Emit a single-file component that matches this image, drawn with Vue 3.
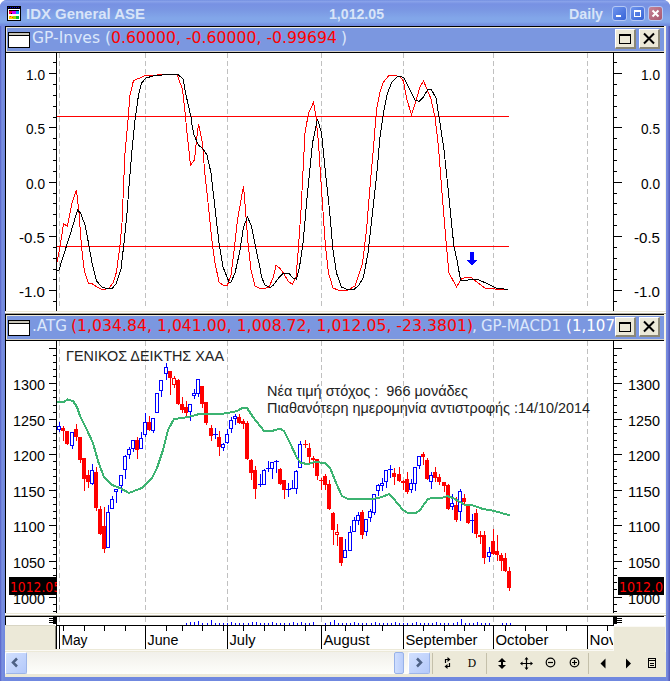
<script setup>
const months = [
  { x: 59, name: 'May', w: 26 },
  { x: 145, name: 'June', w: 31 },
  { x: 227, name: 'July', w: 26 },
  { x: 321, name: 'August', w: 46 },
  { x: 403, name: 'September', w: 72 },
  { x: 493, name: 'October', w: 53 },
  { x: 587, name: 'Nov', w: 27 },
]
const weeks = [63, 84, 104, 125, 166, 182, 202, 223, 243, 264, 284, 305, 325, 345, 362, 382, 423, 444, 464, 484, 505, 525, 546, 566, 607]

// Oscillator scale
const oscLabels = [1, 0.5, 0, -0.5, -1].map((v) => ({ y: Math.round(181.7 - v * 108.6), text: v.toFixed(1) }))
const oscMinor = []
for (let i = -11; i <= 11; i++) if (i % 5) oscMinor.push(Math.round(181.7 - i * 10.86))

// Price scale
const priceY = (p) => Math.round(383.2 + (1300 - p) * 0.711)
const priceLabels = [1300, 1250, 1200, 1150, 1100, 1050, 1000].map((p) => ({ y: priceY(p), text: String(p) }))
const priceMajor = [1350, 1300, 1250, 1200, 1150, 1100, 1050, 1000].map(priceY)
const priceMinor = []
for (let p = 980; p <= 1358; p += 10) if (p % 50) priceMinor.push(priceY(p))

const fastLine = '57,262 60,247 63.5,224 67.5,226 72.5,201 76.5,190 79,213 81.5,247 84.5,272 88.5,283 92.5,284 97,287 101,289 106,289 109,288 113,283 116.5,272 120,245 122,223 123.5,187 125,153 128,120 128.5,113 130,95 133.5,80.5 140,78 145,75.5 150,76 160,74.5 167,74 177,74.5 179,80 182.5,89 185.5,117 187,133 190.5,165 194.5,160 196.5,140 198.5,124 202.5,143 204.5,170 208.5,207 212.5,246 215,263 219,282 224,286 227.5,285 231,275 234.5,247 237.5,220 243.5,186 245.5,210 248,243 251,270 255,286 260,288.5 264,288.5 269,287 273,278 276,265.5 279.5,268 283.5,273 288,281 292.5,284.5 296,277 298.5,247 301,210 305,133 308.5,113 313.5,102.5 316,117 318.5,143 321.5,190 325.5,247 328.5,273 333,288 338,290 348,290 355,286 358.5,276 362.5,263 366.5,230 370,187 373.5,147 376.5,110 380,92 383.5,82 388.5,76 395,75.5 400,77 403.5,81 406.5,98 411.5,115 415.5,102 420,87 423.5,81 426.5,88 431,99 435,117 438.5,147 442,193 446.5,247 449,273 456.5,287 461.5,279 465,277.5 472,278 478,283 485,288 495,289 504,289.5'
const slowLine = '57,270.5 59,270 63,257 70,235 77.5,210 80.5,213 85,225 88.5,243 92,263 96.5,281 102,287 107,288.5 112,288.5 116,284 121,269 124,243 127,213 129.5,180 132,150 135,120 136,113 138.5,95 141.5,83 146,78 153,76 167,74.5 178,74.5 183,79 186,95 191,117 191.5,122 194,135 198.5,145 203,149 207,155 211,173 215,208 219,243 223,267 229,282 231,282 235,273 239.5,253 243.5,227 247.5,217 251.5,226 255.5,247 260,268 261.5,277 265,285 270,287.5 273.5,285 278.5,278 283,273.5 289,273.5 293.5,278.5 296.5,279 299.5,267 303,243 307.5,193 312.5,143 317.5,119 321.5,133 325.5,173 329.5,210 333,250 336.5,273 341.5,287 347,289.5 354,289.5 359,285 363.5,277 368,253 372.5,213 376.5,177 380,137 383.5,113 387.5,93 392,82 397,77 400.5,76.5 404,78 410,90 415,100 419,101.5 423.5,97 427.5,90 431,89 436,98 440,123 444,150 447.5,183 450.5,213 454,247 457,260 460.5,280 464,281 470,279.5 477.5,279.5 487,283.5 496,288 508.5,289.5'
const averageLine = '57,402 63.5,402 67.5,399.5 73,401 77,407 80,416 87,430 93,443 98,461 104,477 112,485 120,488 129,493 134,491 142,488 152,478 157,468 163,450 168,430 174,419 183,418 192,416 201,413.5 205,414 220,414 228,413 237,411 243,407.5 247,408 253,417 264,431 272,431 280,428.5 284,431 290,443 297,458 301,463 308,464 315,462 325,463 330,468 337,485 342,496 348,499 373,499 382,497 389,494 393,498 403,510 408,513 416,513 420,510 428,499 432,498 442,498 447,496 453,498 460,502 465,505 473,505.5 483,509 492,510.5 500,512.5 510,515.5'

// Candles: x, high, low, body top, body bottom, kind (b rising, r falling, h hollow falling)
const candles = `59 422 431 426 429 b|63 426 440 428 431 r|67 431 444 431 444 r|72 432 448 432 445 b|76 424 440 429 437 r|80 437 462 437 460 r|84 458 490 458 479 r|88 470 487 475 482 r|92 464 484 470 483 b|96 467 510 472 508 r|100 506 534 509 534 r|104 507 552 526 549 r|108 505 547 512 547 b|112 496 508 499 508 b|116 489 502 489 491 b|121 475 492 475 485 b|125 455 478 456 469 b|129 447 458 449 454 b|133 440 451 440 448 b|137 437 458 440 450 r|141 432 448 438 448 b|145 413 436 422 434 b|149 416 430 422 430 r|153 418 432 418 430 b|157 393 412 393 412 b|161 380 396 380 390 b|166 363 379 367 373 b|170 371 394 371 378 r|174 376 387 378 384 h|178 379 404 380 404 r|182 397 412 404 410 r|186 401 416 407 413 r|190 404 420 404 411 b|194 389 398 393 395 b|198 379 396 379 393 b|202 386 407 386 404 r|206 402 424 402 423 r|211 425 440 428 436 r|215 428 438 434 434 b|219 431 455 437 447 r|223 443 450 444 447 b|227 429 443 434 442 b|231 417 432 420 428 b|235 414 424 416 418 b|239 414 423 417 423 r|243 419 428 421 424 r|247 421 459 423 459 r|251 459 479 460 473 r|255 466 498 470 489 r|260 474 486 484 485 b|264 469 484 470 484 b|268 461 471 468 469 b|272 462 478 462 468 b|276 460 472 461 462 b|280 468 484 469 484 r|284 480 498 480 490 r|288 483 496 489 489 b|292 480 488 488 488 b|296 470 493 471 488 b|300 441 467 444 467 b|305 440 447 444 444 r|309 443 462 448 457 r|313 456 467 458 460 r|317 459 479 459 476 r|321 478 489 480 480 r|325 474 489 476 485 r|329 480 509 484 509 r|333 512 544 513 530 r|337 524 545 532 534 h|341 537 565 537 563 r|345 539 557 550 557 b|350 526 550 532 550 b|354 517 531 520 531 b|358 512 524 515 520 b|362 510 538 512 535 r|366 519 535 519 531 b|370 509 521 511 517 b|374 494 514 494 512 b|378 484 495 485 490 b|382 478 490 483 485 b|386 470 487 470 481 b|390 465 477 469 469 b|394 468 484 473 477 r|399 467 481 474 481 r|403 480 489 481 483 r|407 472 493 479 492 r|411 479 492 483 489 b|415 467 490 467 483 b|419 456 468 456 465 b|423 452 464 454 457 r|427 458 479 460 479 r|431 472 488 475 481 b|435 467 481 472 478 r|439 474 484 477 482 r|444 482 491 482 486 r|448 484 509 485 509 r|452 494 509 503 506 b|456 497 521 505 520 r|460 489 520 491 511 b|464 494 504 498 502 r|468 505 523 505 523 r|472 514 532 520 520 b|476 509 537 513 534 r|480 531 543 535 537 r|484 531 563 535 558 r|489 547 561 552 556 b|493 529 554 541 554 r|497 535 560 551 555 r|501 553 570 555 561 r|505 553 571 558 571 r|509 567 590 571 588 r`
  .split('|')
  .map((row) => {
    const p = row.split(' ')
    return { x: +p[0], hi: +p[1], lo: +p[2], top: +p[3], bot: +p[4], kind: p[5] }
  })

const tall = { 194: 3, 198: 4, 211: 5, 251: 3, 255: 3, 300: 3, 329: 3, 333: 5, 460: 6, 501: 2 }
const volume = []
for (let i = 0; i < 80; i++) {
  const x = Math.round(186 + i * 4.1)
  if (x >= 316 && x <= 322) continue
  if (x > 490 && x < 500) continue
  if (x > 510) continue
  let h = i % 5 === 1 ? 3 : 2
  for (const k in tall) if (Math.abs(k - x) < 2) h = tall[k]
  volume.push({ x, h })
}
const headers = {
  osc: [
    { t: 'GP-Inves (', x: 32, w: 79, c: '#dbe7fb' },
    { t: '0.60000, -0.60000, -0.99694', x: 111, w: 226, c: '#ff0000' },
    { t: ')', x: 341, w: 6, c: '#dbe7fb' },
  ],
  price: [
    { t: '.ATG', x: 32, w: 35, c: '#dbe7fb' },
    { t: '(1,034.84, 1,041.00, 1,008.72, 1,012.05, -23.3801)', x: 71, w: 402, c: '#ff0000' },
    { t: ',', x: 472, w: 5, c: '#dbe7fb' },
    { t: 'GP-MACD1', x: 481, w: 80, c: '#dbe7fb' },
    { t: '(1,107', x: 566, w: 49, c: '#ffffff' },
  ],
}
</script>

<template>
  <div class="window">
    <header class="title">
      <svg class="app-icon" width="14" height="15" viewBox="0 0 14 15" shape-rendering="crispEdges">
        <rect width="14" height="15" fill="#000" />
        <path d="M1 1.500h12" stroke="#00d" stroke-dasharray="1 1" />
        <rect x="1" y="3" width="12" height="11" fill="#fff" />
        <rect x="2" y="4" width="10" height="4" fill="#000" />
        <path d="M2 5.500h3M2 7h2" stroke="#f04" stroke-width="2" />
        <path d="M5 6h4" stroke="#c0f" stroke-width="3" />
        <path d="M9 6h3" stroke="#09f" stroke-width="3" />
        <path d="M2 11h4" stroke="#fc0" stroke-width="3" />
        <path d="M6 11h3" stroke="#9d0" stroke-width="3" />
        <path d="M9 11h3" stroke="#0b3" stroke-width="3" />
        <path d="M3 10.500h1M5 11.500h1" stroke="#f30" />
      </svg>
      <svg class="title-text" width="588" height="26" viewBox="22 0 588 26">
        <text x="26" y="19" textLength="119" lengthAdjust="spacingAndGlyphs">IDX General ASE</text>
        <text x="329" y="19" textLength="55" lengthAdjust="spacingAndGlyphs">1,012.05</text>
        <text x="569" y="19" textLength="34" lengthAdjust="spacingAndGlyphs">Daily</text>
      </svg>
      <div class="controls">
        <span class="ctl"><svg width="13" height="13"><path d="M3 9h5" stroke="#fff" stroke-width="2" /></svg></span>
        <span class="ctl"><svg width="13" height="13" shape-rendering="crispEdges"><path d="M3.500 3.500h6v6h-6zM3 4.500h7" fill="none" stroke="#fff" /></svg></span>
        <span class="ctl close"><svg width="13" height="13"><path d="M3.500 3.500l6 6M9.500 3.500l-6 6" stroke="#fff" stroke-width="2" /></svg></span>
      </div>
    </header>

    <main class="body">
      <template v-for="key in ['osc', 'price']" :key="key">
        <div class="pane-head">
          <span class="sys"></span>
          <svg class="head-text" width="583" height="23" viewBox="32 0 583 23">
            <text v-for="s in headers[key]" :key="s.x" :x="s.x" y="15" :fill="s.c" :textLength="s.w" lengthAdjust="spacingAndGlyphs">{{ s.t }}</text>
          </svg>
          <span class="btn"><svg width="18" height="17" shape-rendering="crispEdges"><path d="M3.500 4.500h11v9h-11zM3 5.500h12" fill="none" stroke="#000" /></svg></span>
          <span class="btn"><svg width="18" height="17"><path d="M4 3.500l10 10M14 3.500l-10 10" stroke="#000" stroke-width="2" /></svg></span>
        </div>

        <svg v-if="key === 'osc'" class="chart" width="660" height="258" viewBox="5 53 660 258">
          <g shape-rendering="crispEdges">
            <path v-for="m in months" :key="m.x" class="grid" :d="`M${m.x + 0.5} 53V309`" />
            <path d="M5.500 53V311M56.500 53V311M613.500 53V311" stroke="#000" />
            <path v-for="y in oscMinor" :key="y" :d="`M53 ${y + 0.5}h4M614 ${y + 0.5}h3`" stroke="#000" />
            <path v-for="l in oscLabels" :key="l.text" :d="`M49 ${l.y + 0.5}h8M614 ${l.y + 0.5}h8`" stroke="#000" />
            <path d="M57 116.500H509M57 246.500H509" stroke="#f00" />
            <polyline :points="fastLine" fill="none" stroke="#f00" />
            <polyline :points="slowLine" fill="none" stroke="#000" />
            <path d="M470 252h4v8h3l-5 6l-5-6h3z" fill="#00f" />
          </g>
          <g class="scale">
            <template v-for="l in oscLabels" :key="l.text">
              <text :x="l.text.length > 3 ? 19 : 26" :y="l.y + 6.500" :textLength="l.text.length > 3 ? 26 : 19" lengthAdjust="spacingAndGlyphs">{{ l.text }}</text>
              <text :x="l.text.length > 3 ? 634 : 641" :y="l.y + 6.500" :textLength="l.text.length > 3 ? 26 : 19" lengthAdjust="spacingAndGlyphs">{{ l.text }}</text>
            </template>
          </g>
        </svg>

        <svg v-else class="chart" width="660" height="272" viewBox="5 341 660 272">
          <g shape-rendering="crispEdges">
            <path v-for="m in months" :key="m.x" class="grid" :d="`M${m.x + 0.5} 341V613`" />
            <path d="M5.500 341V613M56.500 341V613M613.500 341V613" stroke="#000" />
            <path v-for="y in priceMinor" :key="y" :d="`M53 ${y + 0.5}h4M614 ${y + 0.5}h3`" stroke="#000" />
            <path v-for="y in priceMajor" :key="'M' + y" :d="`M49 ${y + 0.5}h8M614 ${y + 0.5}h8`" stroke="#000" />
            <g v-for="c in candles" :key="c.x" :class="'k-' + c.kind">
              <path :d="`M${c.x + 0.5} ${c.hi}V${c.lo + 1}`" />
              <rect v-if="c.kind === 'r' || c.bot - c.top < 2" :x="c.x - 2" :y="c.top" :width="c.bot - c.top < 2 ? 5 : 4" :height="Math.max(1, c.bot - c.top)" class="solid" />
              <rect v-else :x="c.x - 1.500" :y="c.top + 0.500" width="3" :height="c.bot - c.top" fill="#fff" />
            </g>
            <polyline :points="averageLine" fill="none" stroke="#3cb371" stroke-width="2" />
          </g>
          <g class="scale">
            <template v-for="l in priceLabels" :key="l.text">
              <text x="13" :y="l.y + 6.500" textLength="32" lengthAdjust="spacingAndGlyphs">{{ l.text }}</text>
              <text x="628" :y="l.y + 6.500" textLength="32" lengthAdjust="spacingAndGlyphs">{{ l.text }}</text>
            </template>
          </g>
          <g class="note">
            <text x="66" y="361" textLength="158" lengthAdjust="spacingAndGlyphs">ΓΕΝΙΚΟΣ ΔΕΙΚΤΗΣ ΧΑΑ</text>
            <text x="267" y="396" textLength="201" lengthAdjust="spacingAndGlyphs">Νέα τιμή στόχος :&#160; 966 μονάδες</text>
            <text x="267" y="413" textLength="323" lengthAdjust="spacingAndGlyphs">Πιαθανότερη ημερομηνία αντιστροφής :14/10/2014</text>
          </g>
          <svg x="9" y="577" width="48" height="18">
            <rect width="48" height="18" fill="#000" />
            <text class="last" x="1" y="15" textLength="51" lengthAdjust="spacingAndGlyphs">1012.05</text>
          </svg>
          <svg x="618" y="577" width="46" height="18">
            <rect width="46" height="18" fill="#000" />
            <text class="last" x="1" y="15" textLength="44" lengthAdjust="spacingAndGlyphs">1012.0</text>
          </svg>
        </svg>
        <div class="splitter"></div>
      </template>

      <svg class="chart" width="660" height="36" viewBox="5 616 660 36">
        <rect x="5" y="626" width="660" height="26" fill="#ece9d8" />
        <g shape-rendering="crispEdges">
          <rect x="56" y="626" width="558" height="23" fill="#fff" />
          <path v-for="m in months" :key="m.x" class="grid" :d="`M${m.x + 0.5} 617V625`" />
          <path d="M5 616.500H664" stroke="#000" />
          <path d="M5.500 616V625M56 625.500H614M56.500 616V649M613.500 616V626" stroke="#000" />
          <path d="M55.500 626V649" stroke="#8c897c" />
          <path d="M49 618.500h5M49 620.500h5M49 622.500h5M617 618.500h5M617 620.500h5M617 622.500h5" stroke="#000" />
          <rect x="53" y="617" width="4" height="7" />
          <rect x="613" y="617" width="4" height="7" />
          <path v-for="v in volume" :key="v.x" :d="`M${v.x + 0.5} ${625 - v.h}V625`" stroke="#00f" />
          <path v-for="w in weeks" :key="w" :d="`M${w + 0.5} 626v5`" stroke="#000" />
          <path v-for="m in months" :key="'m' + m.x" :d="`M${m.x + 0.5} 625V649`" stroke="#000" />
          <path d="M5 650.500H613.500V626M614 626.500H665" fill="none" stroke="#fbfaf5" />
          <path d="M5 625.500H55" stroke="#d8d5c4" />
        </g>
        <g class="scale">
          <svg v-for="m in months" :key="m.x" :class="{ open: m.x < 580 }" :x="m.x + 1" y="626" :width="Math.min(100, 613 - m.x - 1)" height="24">
            <text x="1.500" y="19" :textLength="m.w" lengthAdjust="spacingAndGlyphs">{{ m.name }}</text>
          </svg>
        </g>
      </svg>

      <footer class="bar">
        <div class="scroll">
          <span class="sbtn"><svg width="20" height="20"><path d="M11 5.500l-4 4 4 4" fill="none" stroke="#4d6185" stroke-width="2.500" /></svg></span>
          <span class="track"></span>
          <span class="thumb"></span>
          <span class="sbtn right"><svg width="20" height="20"><path d="M8 5.500l4 4-4 4" fill="none" stroke="#4d6185" stroke-width="2.500" /></svg></span>
        </div>
        <svg class="tools" width="236" height="25" viewBox="430 652 236 25">
          <path d="M432.500 653v21M486.500 653v21M588.500 653v21" stroke="#c4c0aa" />
          <g fill="none" stroke="#000" stroke-width="1.200">
            <path d="M445.500 663v-3.500h2.500M449.500 663v3.500h-2.500" />
            <path d="M521 663.500h11M526.500 658v11" />
            <circle cx="550.500" cy="662.500" r="4.300" />
            <path d="M548 662.500h5" />
            <circle cx="574.500" cy="662.500" r="4.300" />
            <path d="M572 662.500h5M574.500 660v5" />
          </g>
          <path d="M447.500 657l3 2.500-3 2.500zM447.500 664l-3 2.500 3 2.500z" />
          <text x="467.500" y="667" class="d">D</text>
          <path d="M502 658l4 4h-3v3h3l-4 4-4-4h3v-3h-3z" />
          <path d="M526.500 657l2 2.500h-4zM526.500 670l2-2.500h-4zM520 663.500l2.500-2v4zM533 663.500l-2.500-2v4z" />
          <path d="M605.500 658.500v10l-5-5zM626 658.500v10l5-5z" />
          <path d="M648.500 658.500h7v9h-7zM648 660.500h8M650 663.500h4M650 665.500h4" fill="none" stroke="#000" shape-rendering="crispEdges" />
        </svg>
      </footer>
    </main>
  </div>
</template>

<style>
body {
  margin: 0;
  background: #fff;
}
</style>

<style scoped>
.window {
  width: 670px;
  height: 681px;
  box-sizing: border-box;
  display: flex;
  flex-direction: column;
  border-radius: 7px 7px 0 0;
  overflow: hidden;
  background: linear-gradient(90deg, #5560c8 0, #7b91df 2px, #7088df 4px, #7088df 666px, #7b8ee0 667px, #5056b8 670px);
  font-family: "Liberation Sans", Arial, sans-serif;
}
.title {
  height: 26px;
  flex: none;
  display: flex;
  align-items: center;
  padding-left: 7px;
  box-sizing: border-box;
  background: linear-gradient(#6a87dd 0, #8ba4ea 1px, #7791e3 4px, #7a97e3 10px, #82a6e9 18px, #82a6e9 22px, #728de0 25px);
}
.app-icon {
  margin-right: 1px;
  margin-top: 1px;
}
.title-text text {
  font-weight: bold;
  font-size: 14.5px;
  fill: #d8e4f8;
}
.title-text {
  flex: none;
  margin-right: 2px;
}
.controls {
  display: flex;
  gap: 3px;
  padding-top: 1px;
}
.ctl {
  width: 13px;
  height: 13px;
  border: 1px solid #b5c8f5;
  border-radius: 3px;
  background: linear-gradient(135deg, #6f95ee, #3763d6);
}
.ctl svg {
  display: block;
}
.ctl.close {
  background: linear-gradient(135deg, #c58496, #a95870);
}
.body {
  display: flex;
  flex-direction: column;
  width: 661px;
  height: 651px;
  margin-left: 5px;
  background: #f4f2e8;
}
.pane-head {
  width: 658px;
  height: 23px;
  display: flex;
  align-items: flex-start;
  background: #7b97e0;
  border-top: 1px solid #000;
  border-bottom: 1px solid #000;
  border-left: 1px solid #000;
  padding: 1px 0;
  box-shadow: inset 0 1px #ece9d8, inset 0 -1px #d4d0c8, inset 1px 0 #ece9d8;
}
.sys {
  flex: none;
  box-sizing: border-box;
  width: 22px;
  height: 16px;
  margin: 4px 2px 0 2px;
  border: 1px solid #000;
  background: linear-gradient(#c8c5b8 0 2px, #000 2px 3px, #fff 3px);
}
.head-text {
  flex: none;
}
.head-text text {
  font-family: "DejaVu Sans", Verdana, sans-serif;
  font-size: 15.5px;
}
.btn {
  width: 18px;
  height: 17px;
  flex: none;
  margin-top: 1px;
  margin-right: 3px;
  border: 1px solid #fff;
  border-right: 2px solid #8a8776;
  border-bottom: 2px solid #8a8776;
  background: #ece9d8;
}
.btn svg,
.chart {
  display: block;
}
.chart {
  flex: none;
  background: #fff;
}
.grid {
  stroke: #c0c0c0;
  stroke-dasharray: 5 3;
}
.scale text {
  font-size: 15.5px;
  fill: #000;
}
.open {
  overflow: visible;
}
.note text {
  font-size: 14.5px;
  fill: #222;
}
.last {
  font-family: "DejaVu Sans", Verdana, sans-serif;
  font-size: 14px;
  fill: #f00;
}
.k-b {
  stroke: #00f;
}
.k-r,
.k-h {
  stroke: #f00;
}
.k-b .solid {
  fill: #00f;
  stroke: none;
}
.k-r .solid {
  fill: #f00;
  stroke: none;
}
.splitter {
  height: 3px;
  flex: none;
  background: linear-gradient(#ece9d8 0 1px, #fff 1px 2px, #aca899 2px);
}
.bar {
  display: flex;
  height: 25px;
  background: #ece9d8;
}
.scroll {
  display: flex;
  width: 425px;
  height: 22px;
  flex: none;
  background: linear-gradient(#f1f0ea, #fefefb);
}
.sbtn {
  width: 20px;
  height: 20px;
  flex: none;
  border: 1px solid #fff;
  border-right-color: #9db5e8;
  border-bottom-color: #9db5e8;
  border-radius: 2px;
  background: linear-gradient(135deg, #d2e0fe, #b4c9fa);
}
.sbtn svg {
  display: block;
}
.track {
  flex: 1;
}
.thumb {
  width: 8px;
  border: 1px solid #98b2e8;
  border-radius: 2px;
  background: linear-gradient(90deg, #cfdefe, #b9cdfb);
}
.right {
  margin-left: 4px;
}
.d {
  font: 11px "DejaVu Serif", serif;
}
</style>
